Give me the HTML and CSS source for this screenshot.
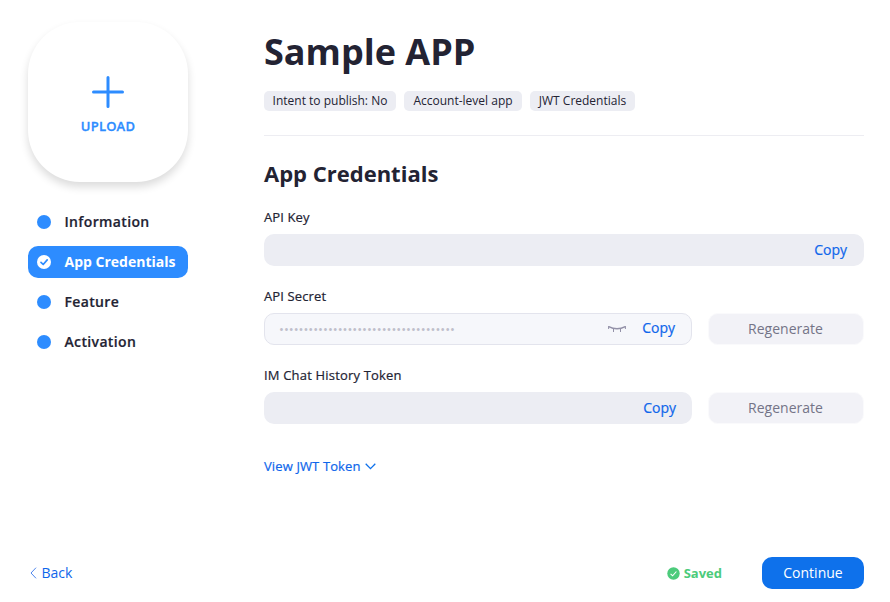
FILE: index.html
```html
<!DOCTYPE html>
<html lang="en">
<head>
<meta charset="utf-8">
<title>Sample APP</title>
<link rel="stylesheet" href="styles.css">
</head>
<body>
<div class="page">
  <div class="layout">
    <aside class="sidebar">
      <div class="upload">
        <svg width="32" height="32" viewBox="0 0 32 32" fill="none" stroke="#2d8cff" stroke-width="3" stroke-linecap="round"><path d="M16 1.5v29M1.5 16h29"/></svg>
        <span class="upload-label">UPLOAD</span>
      </div>
      <nav class="steps">
        <a class="step"><span class="dot"></span><span class="step-name">Information</span></a>
        <a class="step active"><span class="dot"><svg width="14" height="14" viewBox="0 0 14 14" fill="none" stroke="#2d8cff" stroke-width="1.7" stroke-linecap="round" stroke-linejoin="round"><path d="M4 7.4l2.2 2.1 4-4.6"/></svg></span><span class="step-name">App Credentials</span></a>
        <a class="step"><span class="dot"></span><span class="step-name">Feature</span></a>
        <a class="step"><span class="dot"></span><span class="step-name">Activation</span></a>
      </nav>
    </aside>
    <main class="main">
      <h1 class="title">Sample APP</h1>
      <div class="tags">
        <span class="tag tag-intent">Intent to publish: No</span>
        <span class="tag tag-level">Account-level app</span>
        <span class="tag tag-jwt">JWT Credentials</span>
      </div>
      <h2 class="heading">App Credentials</h2>
      <div class="group">
        <label class="label">API Key</label>
        <div class="row"><div class="field wide"><a class="copy">Copy</a></div></div>
      </div>
      <div class="group">
        <label class="label">API Secret</label>
        <div class="row">
          <div class="field secret">
            <span class="mask">••••••••••••••••••••••••••••••••••••</span>
            <svg class="eye" width="18" height="8" viewBox="0 0 18 8" fill="none" stroke="#9391a8"><path stroke-width="1.6" d="M.7 1.6Q9 6 17.3 1.6"/><path stroke-width="1" d="M.6 1v3M17.4 1v3M5.5 4v3M12.5 4v3"/></svg>
            <a class="copy">Copy</a>
          </div>
          <button class="regen">Regenerate</button>
        </div>
      </div>
      <div class="group">
        <label class="label long">IM Chat History Token</label>
        <div class="row">
          <div class="field"><a class="copy">Copy</a></div>
          <button class="regen">Regenerate</button>
        </div>
      </div>
      <a class="view"><span>View JWT Token</span><svg width="11" height="7" viewBox="0 0 11 7" fill="none" stroke="#0e71eb" stroke-width="1.3"><path d="M.7.8l4.8 4.8L10.3.8"/></svg></a>
    </main>
  </div>
  <footer class="footer">
    <a class="back"><svg width="7" height="12" viewBox="0 0 7 12" fill="none" stroke="#4f86ec" stroke-width="1"><path d="M6 .7L1 6l5 5.3"/></svg><span>Back</span></a>
    <span class="saved"><svg width="13" height="13" viewBox="0 0 13 13"><circle cx="6.5" cy="6.5" r="6.2" fill="#4ccb7b"/><path d="M3.6 6.8l2 2 3.8-4.3" fill="none" stroke="#fff" stroke-width="1.1"/></svg><span>Saved</span></span>
    <button class="continue">Continue</button>
  </footer>
</div>
</body>
</html>
```
FILE: styles.css
```css
* { box-sizing: border-box; }
body {
  margin: 0;
  background: #fff;
  color: #232333;
  font-family: "Open Sans", sans-serif;
  font-size: 14px;
}
button { border: 0; padding: 0; font: inherit; }
svg { display: block; flex: none; }
.page {
  width: 890px;
  height: 602px;
  padding: 22px 26px 13px 28px;
  display: flex;
  flex-direction: column;
  overflow: hidden;
}
.layout { display: flex; gap: 76px; flex: 1; }
.sidebar { width: 160px; flex: none; }
.upload {
  height: 160px;
  padding-top: 54px;
  border-radius: 52px;
  box-shadow: 0 5px 8px rgba(0, 0, 0, .14);
  display: flex;
  flex-direction: column;
  align-items: center;
  color: #2d8cff;
}
.upload-label { margin-top: 9px; font-size: 13px; line-height: 18px; font-weight: 600; letter-spacing: .2px; -webkit-text-stroke: .3px; }
.steps { margin-top: 24px; display: flex; flex-direction: column; gap: 8px; }
.step {
  height: 32px;
  padding-left: 9px;
  border-radius: 10px;
  display: flex;
  align-items: center;
  gap: 13.5px;
  font-weight: 600;
  letter-spacing: .35px;
  -webkit-text-stroke: .2px;
  white-space: nowrap;
}
.step-name { padding-bottom: 2px; }
.dot { width: 14px; height: 14px; border-radius: 50%; background: #2d8cff; flex: none; }
.active { background: #2d8cff; color: #fff; font-weight: 700; letter-spacing: 0; -webkit-text-stroke: 0; }
.active .dot { background: #fff; }
.main { width: 600px; }
.title { margin: 3px 0 0; font-size: 36px; line-height: 54px; font-weight: 700; }
.tags {
  height: 57px;
  padding-top: 12px;
  border-bottom: 1px solid #ededf2;
  display: flex;
  align-items: flex-start;
  gap: 8px;
}
.tag {
  height: 20px;
  border-radius: 5px;
  background: #ecedf3;
  font-size: 12px;
  line-height: 20px;
  text-align: center;
  white-space: nowrap;
}
.tag-intent { width: 132px; }
.tag-level { width: 118px; }
.tag-jwt { width: 105px; }
.heading { margin: 21px 0 19px; font-size: 22px; line-height: 32px; font-weight: 700; }
.group { height: 79px; }
.label { display: block; height: 26px; font-size: 13px; line-height: 18px; font-weight: 500; letter-spacing: .12px; -webkit-text-stroke: .2px; }
.long { letter-spacing: .18px; }
.row { display: flex; gap: 16px; align-items: center; }
.field {
  flex: 1;
  height: 32px;
  padding: 0 16px;
  border-radius: 10px;
  background: #ecedf3;
  display: flex;
  align-items: center;
  justify-content: flex-end;
}
.wide { padding-right: 17px; }
.secret { background: #f6f7fb; border: 1px solid #e3e4ed; padding: 0 15px 0 14px; }
.mask { flex: 1; font-size: 13px; color: #bfbfcb; }
.eye { margin-right: 16px; }
.copy { color: #0e66eb; font-weight: 500; line-height: 20px; -webkit-text-stroke: .2px; }
.secret .copy { margin-bottom: 2px; margin-right: 1px; }
.regen { width: 156px; height: 32px; padding: 0 1px 2px 0; border-radius: 10px; background: #f2f2f7; border: 1px solid #fafafc; color: #747487; }
.view { margin-top: 12px; display: inline-flex; align-items: center; gap: 4px; color: #0e66eb; font-size: 13px; line-height: 18px; font-weight: 500; letter-spacing: .12px; -webkit-text-stroke: .2px; }
.footer { height: 32px; display: flex; align-items: center; }
.back { margin-left: 2px; margin-right: auto; padding-bottom: 1px; display: flex; align-items: center; gap: 4.5px; color: #0e66eb; }
.saved { display: flex; align-items: center; gap: 4px; margin-right: 40px; color: #4ccb7b; font-size: 13px; font-weight: 700; }
.continue { width: 102px; height: 32px; padding-bottom: 2px; border-radius: 10px; background: #0e71eb; color: #fff; font-weight: 500; }
```
